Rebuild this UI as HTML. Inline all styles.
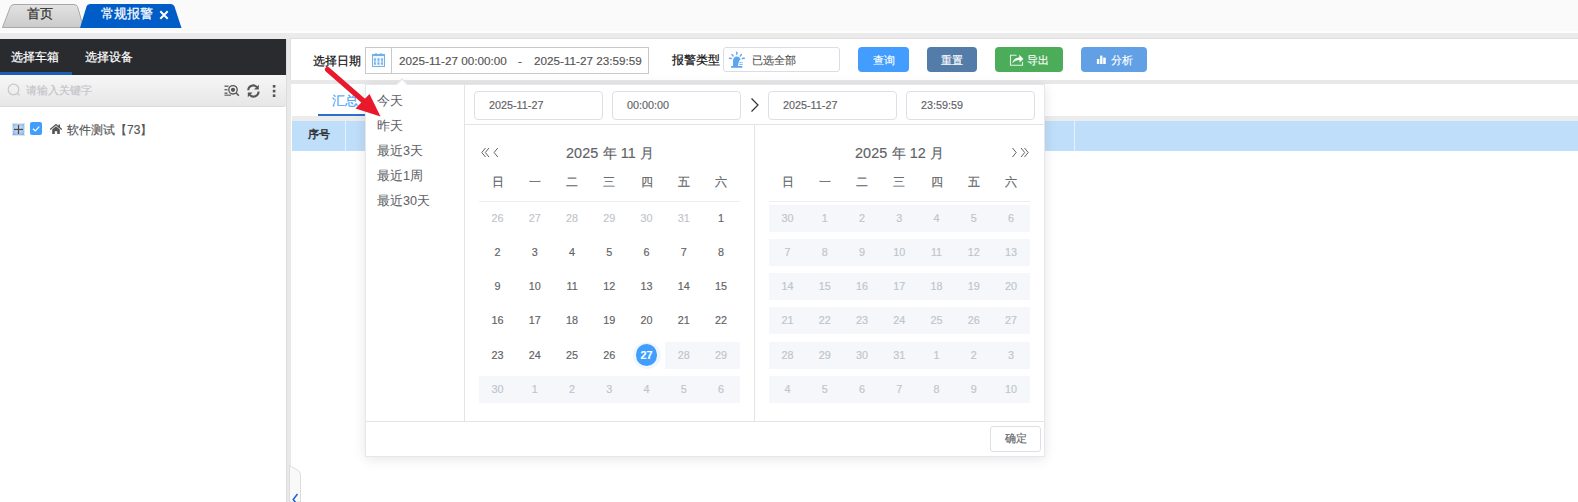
<!DOCTYPE html><html><head><meta charset="utf-8"><style>
*{margin:0;padding:0;box-sizing:border-box}
html,body{width:1578px;height:502px;overflow:hidden;background:#fafafa;font-family:"Liberation Sans",sans-serif;}
.ab{position:absolute}
.t{position:absolute;white-space:nowrap;line-height:1;-webkit-text-stroke:0.15px}
.b{-webkit-text-stroke:0.22px}
</style></head><body>
<svg class="ab" style="left:0;top:0" width="200" height="32">
<defs><linearGradient id="gt" x1="0" y1="0" x2="0" y2="1"><stop offset="0" stop-color="#e2e2e2"/><stop offset="1" stop-color="#cbcbcb"/></linearGradient></defs>
<path d="M2.5 27.5 L10.5 6.5 Q11.5 4.5 14 4.5 L74 4.5 Q76.5 4.5 77.5 6.5 L83.5 27.5 Z" fill="url(#gt)" stroke="#a9a9a9" stroke-width="1"/>
<path d="M80 28 L86.5 6.5 Q87.3 4 90 4 L171 4 Q173.5 4 174.5 6.5 L181.5 28 Z" fill="#005cc7"/>
</svg>
<div class="t b" style="left:27px;top:7px;font-size:13px;color:#333">首页</div>
<div class="t b" style="left:101px;top:7px;font-size:13px;color:#fff">常规报警</div>
<svg class="ab" style="left:158px;top:9px" width="12" height="12"><path d="M2.3 2.3 L9.7 9.7 M9.7 2.3 L2.3 9.7" stroke="#fff" stroke-width="2"/></svg>
<div class="ab" style="left:0;top:31px;width:1578px;height:2px;background:#fdfdfd"></div>
<div class="ab" style="left:0;top:33px;width:1578px;height:6px;background:#ebebeb"></div>
<div class="ab" style="left:0;top:39px;width:286px;height:36px;background:#2a2b2f"></div>
<div class="ab" style="left:0;top:72px;width:72px;height:3px;background:#1c5db5"></div>
<div class="t b" style="left:11px;top:51px;font-size:12px;color:#fff">选择车箱</div>
<div class="t b" style="left:85px;top:51px;font-size:12px;color:#fff">选择设备</div>
<div class="ab" style="left:0;top:75px;width:286px;height:32px;background:linear-gradient(#f6f6f6,#e7e7e7);border-bottom:1px solid #d6dce4;border-radius:0 0 4px 0;box-shadow:1px 0 0 #e0e3e8"></div>
<svg class="ab" style="left:6px;top:82px" width="16" height="16"><circle cx="7.5" cy="7.5" r="5.3" fill="none" stroke="#c8c8c8" stroke-width="1.2"/><line x1="11.3" y1="11.3" x2="13.5" y2="13.5" stroke="#c8c8c8" stroke-width="1.3"/></svg>
<div class="t" style="left:26px;top:85px;font-size:11px;color:#c3c3c8">请输入关键字</div>
<svg class="ab" style="left:223px;top:84px" width="18" height="14">
<rect x="1.5" y="1.5" width="4" height="1.4" fill="#666"/><rect x="1.5" y="5" width="3" height="1.4" fill="#666"/><rect x="1.5" y="8.5" width="3" height="1.4" fill="#666"/><rect x="1.5" y="10.5" width="6.5" height="1.4" fill="#777"/>
<circle cx="10" cy="5.8" r="4.2" fill="none" stroke="#555" stroke-width="1.3"/><circle cx="10" cy="5.8" r="2.1" fill="#555"/>
<line x1="13" y1="8.8" x2="15.8" y2="11.8" stroke="#555" stroke-width="1.5"/></svg>
<svg class="ab" style="left:246px;top:84px" width="15" height="14">
<path d="M2.2 6.2 A5 5 0 0 1 11 3.2" fill="none" stroke="#555" stroke-width="2"/><path d="M12.8 0.8 L12.8 5.6 L8 5.6 Z" fill="#555"/>
<path d="M12.6 7.6 A5 5 0 0 1 3.8 10.8" fill="none" stroke="#555" stroke-width="2"/><path d="M1.8 13.2 L1.8 8.4 L6.6 8.4 Z" fill="#555"/></svg>
<svg class="ab" style="left:271px;top:84px" width="6" height="14"><rect x="1.8" y="1" width="2.6" height="2.6" fill="#555"/><rect x="1.8" y="5.8" width="2.6" height="2.6" fill="#555"/><rect x="1.8" y="10.4" width="2.6" height="2.6" fill="#555"/></svg>
<div class="ab" style="left:0;top:107px;width:286px;height:395px;background:#fff"></div>
<div class="ab" style="left:12px;top:123px;width:13px;height:13px;background:radial-gradient(circle at 50% 45%,#e4eefa 0%,#a9cdf3 55%,#6ea8ea 100%);border:1px solid #dfe3e8"></div>
<svg class="ab" style="left:12px;top:123px" width="13" height="13"><rect x="2" y="5.8" width="9" height="1.3" fill="#4a4a4a"/><rect x="5.85" y="2" width="1.3" height="9" fill="#4a4a4a"/></svg>
<div class="ab" style="left:30px;top:122px;width:12px;height:13px;background:#409eff;border-radius:2px"></div>
<svg class="ab" style="left:30px;top:122px" width="12" height="13"><path d="M3 6.8 L5.3 9 L9.3 4.6" fill="none" stroke="#fff" stroke-width="1.2"/></svg>
<svg class="ab" style="left:49px;top:123px" width="14" height="12"><path d="M1.2 6.6 L7 1.6 L12.8 6.6" fill="none" stroke="#555" stroke-width="1.3"/><path d="M3.2 6.4 L7 3.2 L10.8 6.4 L10.8 11 L8.2 11 L8.2 8.3 L5.8 8.3 L5.8 11 L3.2 11 Z" fill="#555"/><rect x="9.4" y="1.6" width="1.6" height="3" fill="#555"/></svg>
<div class="t" style="left:67px;top:124px;font-size:12px;color:#555">软件测试【73】</div>
<div class="ab" style="left:286px;top:39px;width:5px;height:463px;background:#e9e9e9;border-left:1px solid #dcdcdc"></div>
<div class="ab" style="left:290px;top:38px;width:1288px;height:42px;background:#fff;border-top:1px solid #dedede;border-left:1px solid #dedede"></div>
<div class="ab" style="left:291px;top:80px;width:1287px;height:4px;background:#e8e8e8"></div>
<div class="ab" style="left:291px;top:84px;width:1287px;height:418px;background:#fff"></div>
<div class="t b" style="left:313px;top:55px;font-size:12px;color:#111">选择日期</div>
<div class="ab" style="left:365px;top:47px;width:284px;height:27px;border:1px solid #c9c9c9;background:#fff"></div>
<div class="ab" style="left:391px;top:47px;width:1px;height:27px;background:#c9c9c9"></div>
<svg class="ab" style="left:371px;top:52px" width="15" height="15">
<rect x="1.5" y="2.5" width="12" height="12" fill="#eef5fd" stroke="#74b0ea" stroke-width="1"/>
<rect x="1" y="2" width="13" height="2" fill="#74b0ea"/>
<circle cx="5" cy="2.6" r="1.4" fill="#74b0ea"/><circle cx="10" cy="2.6" r="1.4" fill="#74b0ea"/>
<g fill="#9cc8f2"><rect x="3" y="6" width="1.8" height="7"/><rect x="6.6" y="6" width="1.8" height="7"/><rect x="10.2" y="6" width="1.8" height="7"/></g>
<g fill="#74b0ea"><rect x="3" y="7" width="1.8" height="1.2"/><rect x="6.6" y="7" width="1.8" height="1.2"/><rect x="10.2" y="7" width="1.8" height="1.2"/><rect x="3" y="11" width="1.8" height="1.2"/><rect x="6.6" y="11" width="1.8" height="1.2"/><rect x="10.2" y="11" width="1.8" height="1.2"/></g>
</svg>
<div class="t" style="left:399px;top:55px;font-size:11.7px;color:#555">2025-11-27 00:00:00</div>
<div class="t" style="left:518px;top:55px;font-size:11.7px;color:#555">-</div>
<div class="t" style="left:534px;top:55px;font-size:11.7px;color:#555">2025-11-27 23:59:59</div>
<div class="t b" style="left:672px;top:54px;font-size:12px;color:#111">报警类型</div>
<div class="ab" style="left:723px;top:47px;width:117px;height:25px;border:1px solid #d9dde6;border-radius:3px;background:#fff"></div>
<svg class="ab" style="left:728px;top:51px" width="18" height="18">
<g stroke="#5ea5f0" stroke-width="1.4" stroke-linecap="round"><line x1="8.8" y1="1.3" x2="8.8" y2="3.3"/><line x1="4" y1="3.6" x2="5.1" y2="5"/><line x1="13.4" y1="3.6" x2="12.3" y2="5"/><line x1="1.5" y1="7.3" x2="3.3" y2="7.5"/><line x1="14.3" y1="7.5" x2="16.3" y2="7.3"/></g>
<path d="M5 15 L5 10.2 Q5 5.5 9 5.5 Q11.6 5.5 12.6 8.6 L11.4 9.6 Q10.4 11.5 10 15 Z" fill="#5ea5f0"/>
<rect x="3" y="15" width="11.5" height="1.8" rx="0.5" fill="#5ea5f0"/>
<g fill="#7db6f2"><rect x="11.2" y="11.2" width="3.6" height="0.9"/><rect x="11.2" y="13.1" width="3.6" height="0.9"/></g></svg>
<div class="t" style="left:752px;top:55px;font-size:11px;color:#555">已选全部</div>
<div class="ab" style="left:858px;top:47px;width:51px;height:25px;background:#429dff;border-radius:4px"></div>
<div class="t" style="left:873px;top:55px;font-size:11px;color:#fff">查询</div>
<div class="ab" style="left:927px;top:47px;width:50px;height:25px;background:#537ca8;border-radius:4px"></div>
<div class="t" style="left:941px;top:55px;font-size:11px;color:#fff">重置</div>
<div class="ab" style="left:995px;top:47px;width:68px;height:25px;background:#4bad5a;border-radius:4px"></div>
<div class="t" style="left:1027px;top:55px;font-size:11px;color:#fff">导出</div>
<svg class="ab" style="left:1009px;top:53px" width="16" height="15"><path d="M7.5 2.3 L1.5 2.3 L1.5 12.3 L13.5 12.3 L13.5 8.8" fill="none" stroke="#fff" stroke-opacity="0.85" stroke-width="1.1"/><path d="M3.3 10.2 Q4.8 4.8 10.3 4.4 L10.3 1.8 L14.4 5.9 L10.5 9.4 L10.5 7 Q6.5 6.9 3.3 10.2 Z" fill="#fff"/></svg>
<div class="ab" style="left:1081px;top:47px;width:66px;height:25px;background:#62a0e5;border-radius:4px"></div>
<div class="t" style="left:1111px;top:55px;font-size:11px;color:#fff">分析</div>
<svg class="ab" style="left:1096px;top:55px" width="11" height="10"><rect x="0.9" y="4" width="2.4" height="5" fill="#fff"/><rect x="4.1" y="0.6" width="2.4" height="8.4" fill="#fff"/><rect x="7.2" y="2.7" width="2.6" height="6.3" fill="#fff"/></svg>
<div class="t" style="left:332px;top:94px;font-size:13px;color:#409eff">汇总</div>
<div class="ab" style="left:318px;top:114px;width:60px;height:2px;background:#2a70d0"></div>
<div class="ab" style="left:292px;top:116px;width:1286px;height:5px;background:#ececec"></div>
<div class="ab" style="left:292px;top:121px;width:1286px;height:30px;background:#bfdef9"></div>
<div class="ab" style="left:345px;top:121px;width:1px;height:30px;background:#e6f1fc"></div>
<div class="ab" style="left:1074px;top:121px;width:1px;height:30px;background:#e6f1fc"></div>
<div class="t" style="left:308px;top:129px;font-size:11.4px;color:#333;-webkit-text-stroke:0.5px #333">序号</div>
<div class="ab" style="left:365px;top:84px;width:680px;height:373px;background:#fff;border:1px solid #e4e7ed;box-shadow:0 2px 12px rgba(0,0,0,.1)"></div>
<div class="ab" style="left:396px;top:78px;width:0;height:0;border:6px solid transparent;border-top:0;border-bottom:6px solid #e4e7ed"></div>
<div class="ab" style="left:397px;top:79.5px;width:0;height:0;border:5px solid transparent;border-top:0;border-bottom:5px solid #fff"></div>
<div class="ab" style="left:464px;top:85px;width:1px;height:336px;background:#e4e4e4"></div>
<div class="t" style="left:377px;top:95px;font-size:12.6px;color:#606266;-webkit-text-stroke:0.05px">今天</div>
<div class="t" style="left:377px;top:120px;font-size:12.6px;color:#606266;-webkit-text-stroke:0.05px">昨天</div>
<div class="t" style="left:377px;top:145px;font-size:12.6px;color:#606266;-webkit-text-stroke:0.05px">最近3天</div>
<div class="t" style="left:377px;top:170px;font-size:12.6px;color:#606266;-webkit-text-stroke:0.05px">最近1周</div>
<div class="t" style="left:377px;top:195px;font-size:12.6px;color:#606266;-webkit-text-stroke:0.05px">最近30天</div>
<div class="ab" style="left:474px;top:91px;width:129px;height:29px;border:1px solid #dcdfe6;border-radius:4px"></div>
<div class="t" style="left:489px;top:100px;font-size:10.8px;color:#606266">2025-11-27</div>
<div class="ab" style="left:612px;top:91px;width:129px;height:29px;border:1px solid #dcdfe6;border-radius:4px"></div>
<div class="t" style="left:627px;top:100px;font-size:10.8px;color:#606266">00:00:00</div>
<div class="ab" style="left:768px;top:91px;width:129px;height:29px;border:1px solid #dcdfe6;border-radius:4px"></div>
<div class="t" style="left:783px;top:100px;font-size:10.8px;color:#606266">2025-11-27</div>
<div class="ab" style="left:906px;top:91px;width:129px;height:29px;border:1px solid #dcdfe6;border-radius:4px"></div>
<div class="t" style="left:921px;top:100px;font-size:10.8px;color:#606266">23:59:59</div>
<svg class="ab" style="left:749px;top:97px" width="12" height="16"><path d="M2.5 1.5 L9 8 L2.5 14.5" fill="none" stroke="#303133" stroke-width="1.2"/></svg>
<div class="ab" style="left:465px;top:124px;width:579px;height:1px;background:#e4e4e4"></div>
<div class="ab" style="left:754px;top:125px;width:1px;height:296px;background:#e4e4e4"></div>
<div class="ab" style="left:366px;top:421px;width:678px;height:1px;background:#e4e4e4"></div>
<div class="ab" style="left:990px;top:426px;width:51px;height:26px;border:1px solid #dcdfe6;border-radius:3px;background:#fff"></div>
<div class="t" style="left:1005px;top:433px;font-size:10.8px;color:#606266">确定</div>
<div class="t" style="left:566px;top:146px;font-size:14.4px;letter-spacing:0.1px;color:#606266">2025 年 11 月</div>
<svg class="ab" style="left:480px;top:147px" width="20" height="11"><g fill="none" stroke="#606266" stroke-width="1"><path d="M5.5 1 L1.8 5.5 L5.5 10"/><path d="M9 1 L5.3 5.5 L9 10"/><path d="M17.8 1 L14.1 5.5 L17.8 10"/></g></svg>
<div class="t" style="left:491.6px;top:176px;font-size:12px;color:#606266;width:12px;text-align:center">日</div>
<div class="t" style="left:528.8px;top:176px;font-size:12px;color:#606266;width:12px;text-align:center">一</div>
<div class="t" style="left:566.1px;top:176px;font-size:12px;color:#606266;width:12px;text-align:center">二</div>
<div class="t" style="left:603.3px;top:176px;font-size:12px;color:#606266;width:12px;text-align:center">三</div>
<div class="t" style="left:640.5px;top:176px;font-size:12px;color:#606266;width:12px;text-align:center">四</div>
<div class="t" style="left:677.8px;top:176px;font-size:12px;color:#606266;width:12px;text-align:center">五</div>
<div class="t" style="left:715.0px;top:176px;font-size:12px;color:#606266;width:12px;text-align:center">六</div>
<div class="ab" style="left:479px;top:201px;width:260.6px;height:1px;background:#ebeef5"></div>
<div class="t" style="left:482.61px;top:212.50px;width:30px;text-align:center;font-size:10.8px;color:#c0c4cc;font-weight:normal">26</div>
<div class="t" style="left:519.84px;top:212.50px;width:30px;text-align:center;font-size:10.8px;color:#c0c4cc;font-weight:normal">27</div>
<div class="t" style="left:557.07px;top:212.50px;width:30px;text-align:center;font-size:10.8px;color:#c0c4cc;font-weight:normal">28</div>
<div class="t" style="left:594.30px;top:212.50px;width:30px;text-align:center;font-size:10.8px;color:#c0c4cc;font-weight:normal">29</div>
<div class="t" style="left:631.53px;top:212.50px;width:30px;text-align:center;font-size:10.8px;color:#c0c4cc;font-weight:normal">30</div>
<div class="t" style="left:668.76px;top:212.50px;width:30px;text-align:center;font-size:10.8px;color:#c0c4cc;font-weight:normal">31</div>
<div class="t" style="left:705.99px;top:212.50px;width:30px;text-align:center;font-size:10.8px;color:#606266;font-weight:normal">1</div>
<div class="t" style="left:482.61px;top:246.75px;width:30px;text-align:center;font-size:10.8px;color:#606266;font-weight:normal">2</div>
<div class="t" style="left:519.84px;top:246.75px;width:30px;text-align:center;font-size:10.8px;color:#606266;font-weight:normal">3</div>
<div class="t" style="left:557.07px;top:246.75px;width:30px;text-align:center;font-size:10.8px;color:#606266;font-weight:normal">4</div>
<div class="t" style="left:594.30px;top:246.75px;width:30px;text-align:center;font-size:10.8px;color:#606266;font-weight:normal">5</div>
<div class="t" style="left:631.53px;top:246.75px;width:30px;text-align:center;font-size:10.8px;color:#606266;font-weight:normal">6</div>
<div class="t" style="left:668.76px;top:246.75px;width:30px;text-align:center;font-size:10.8px;color:#606266;font-weight:normal">7</div>
<div class="t" style="left:705.99px;top:246.75px;width:30px;text-align:center;font-size:10.8px;color:#606266;font-weight:normal">8</div>
<div class="t" style="left:482.61px;top:281.00px;width:30px;text-align:center;font-size:10.8px;color:#606266;font-weight:normal">9</div>
<div class="t" style="left:519.84px;top:281.00px;width:30px;text-align:center;font-size:10.8px;color:#606266;font-weight:normal">10</div>
<div class="t" style="left:557.07px;top:281.00px;width:30px;text-align:center;font-size:10.8px;color:#606266;font-weight:normal">11</div>
<div class="t" style="left:594.30px;top:281.00px;width:30px;text-align:center;font-size:10.8px;color:#606266;font-weight:normal">12</div>
<div class="t" style="left:631.53px;top:281.00px;width:30px;text-align:center;font-size:10.8px;color:#606266;font-weight:normal">13</div>
<div class="t" style="left:668.76px;top:281.00px;width:30px;text-align:center;font-size:10.8px;color:#606266;font-weight:normal">14</div>
<div class="t" style="left:705.99px;top:281.00px;width:30px;text-align:center;font-size:10.8px;color:#606266;font-weight:normal">15</div>
<div class="t" style="left:482.61px;top:315.25px;width:30px;text-align:center;font-size:10.8px;color:#606266;font-weight:normal">16</div>
<div class="t" style="left:519.84px;top:315.25px;width:30px;text-align:center;font-size:10.8px;color:#606266;font-weight:normal">17</div>
<div class="t" style="left:557.07px;top:315.25px;width:30px;text-align:center;font-size:10.8px;color:#606266;font-weight:normal">18</div>
<div class="t" style="left:594.30px;top:315.25px;width:30px;text-align:center;font-size:10.8px;color:#606266;font-weight:normal">19</div>
<div class="t" style="left:631.53px;top:315.25px;width:30px;text-align:center;font-size:10.8px;color:#606266;font-weight:normal">20</div>
<div class="t" style="left:668.76px;top:315.25px;width:30px;text-align:center;font-size:10.8px;color:#606266;font-weight:normal">21</div>
<div class="t" style="left:705.99px;top:315.25px;width:30px;text-align:center;font-size:10.8px;color:#606266;font-weight:normal">22</div>
<div class="ab" style="left:665.14px;top:341.50px;width:37.63px;height:27px;background:#f5f7fa"></div>
<div class="ab" style="left:702.37px;top:341.50px;width:37.63px;height:27px;background:#f5f7fa"></div>
<div class="t" style="left:482.61px;top:349.50px;width:30px;text-align:center;font-size:10.8px;color:#606266;font-weight:normal">23</div>
<div class="t" style="left:519.84px;top:349.50px;width:30px;text-align:center;font-size:10.8px;color:#606266;font-weight:normal">24</div>
<div class="t" style="left:557.07px;top:349.50px;width:30px;text-align:center;font-size:10.8px;color:#606266;font-weight:normal">25</div>
<div class="t" style="left:594.30px;top:349.50px;width:30px;text-align:center;font-size:10.8px;color:#606266;font-weight:normal">26</div>
<div class="ab" style="left:632.53px;top:341.50px;width:28px;height:27px;border-radius:50%;background:#f2f6fc"></div>
<div class="ab" style="left:635.73px;top:344.20px;width:21.6px;height:21.6px;border-radius:50%;background:#409eff"></div>
<div class="t" style="left:631.53px;top:349.50px;width:30px;text-align:center;font-size:10.8px;color:#fff;font-weight:bold">27</div>
<div class="t" style="left:668.76px;top:349.50px;width:30px;text-align:center;font-size:10.8px;color:#c0c4cc;font-weight:normal">28</div>
<div class="t" style="left:705.99px;top:349.50px;width:30px;text-align:center;font-size:10.8px;color:#c0c4cc;font-weight:normal">29</div>
<div class="ab" style="left:479.00px;top:375.75px;width:37.63px;height:27px;background:#f5f7fa"></div>
<div class="ab" style="left:516.23px;top:375.75px;width:37.63px;height:27px;background:#f5f7fa"></div>
<div class="ab" style="left:553.46px;top:375.75px;width:37.63px;height:27px;background:#f5f7fa"></div>
<div class="ab" style="left:590.69px;top:375.75px;width:37.63px;height:27px;background:#f5f7fa"></div>
<div class="ab" style="left:627.91px;top:375.75px;width:37.63px;height:27px;background:#f5f7fa"></div>
<div class="ab" style="left:665.14px;top:375.75px;width:37.63px;height:27px;background:#f5f7fa"></div>
<div class="ab" style="left:702.37px;top:375.75px;width:37.63px;height:27px;background:#f5f7fa"></div>
<div class="t" style="left:482.61px;top:383.75px;width:30px;text-align:center;font-size:10.8px;color:#c0c4cc;font-weight:normal">30</div>
<div class="t" style="left:519.84px;top:383.75px;width:30px;text-align:center;font-size:10.8px;color:#c0c4cc;font-weight:normal">1</div>
<div class="t" style="left:557.07px;top:383.75px;width:30px;text-align:center;font-size:10.8px;color:#c0c4cc;font-weight:normal">2</div>
<div class="t" style="left:594.30px;top:383.75px;width:30px;text-align:center;font-size:10.8px;color:#c0c4cc;font-weight:normal">3</div>
<div class="t" style="left:631.53px;top:383.75px;width:30px;text-align:center;font-size:10.8px;color:#c0c4cc;font-weight:normal">4</div>
<div class="t" style="left:668.76px;top:383.75px;width:30px;text-align:center;font-size:10.8px;color:#c0c4cc;font-weight:normal">5</div>
<div class="t" style="left:705.99px;top:383.75px;width:30px;text-align:center;font-size:10.8px;color:#c0c4cc;font-weight:normal">6</div>
<div class="t" style="left:855px;top:146px;font-size:14.4px;letter-spacing:0.1px;color:#606266">2025 年 12 月</div>
<svg class="ab" style="left:1010px;top:147px" width="20" height="11"><g fill="none" stroke="#606266" stroke-width="1"><path d="M2.5 1 L6.2 5.5 L2.5 10"/><path d="M11 1 L14.7 5.5 L11 10"/><path d="M14.5 1 L18.2 5.5 L14.5 10"/></g></svg>
<div class="t" style="left:781.6px;top:176px;font-size:12px;color:#606266;width:12px;text-align:center">日</div>
<div class="t" style="left:818.8px;top:176px;font-size:12px;color:#606266;width:12px;text-align:center">一</div>
<div class="t" style="left:856.1px;top:176px;font-size:12px;color:#606266;width:12px;text-align:center">二</div>
<div class="t" style="left:893.3px;top:176px;font-size:12px;color:#606266;width:12px;text-align:center">三</div>
<div class="t" style="left:930.5px;top:176px;font-size:12px;color:#606266;width:12px;text-align:center">四</div>
<div class="t" style="left:967.8px;top:176px;font-size:12px;color:#606266;width:12px;text-align:center">五</div>
<div class="t" style="left:1005.0px;top:176px;font-size:12px;color:#606266;width:12px;text-align:center">六</div>
<div class="ab" style="left:769px;top:201px;width:260.6px;height:1px;background:#ebeef5"></div>
<div class="ab" style="left:769.00px;top:204.50px;width:37.63px;height:27px;background:#f5f7fa"></div>
<div class="ab" style="left:806.23px;top:204.50px;width:37.63px;height:27px;background:#f5f7fa"></div>
<div class="ab" style="left:843.46px;top:204.50px;width:37.63px;height:27px;background:#f5f7fa"></div>
<div class="ab" style="left:880.69px;top:204.50px;width:37.63px;height:27px;background:#f5f7fa"></div>
<div class="ab" style="left:917.91px;top:204.50px;width:37.63px;height:27px;background:#f5f7fa"></div>
<div class="ab" style="left:955.14px;top:204.50px;width:37.63px;height:27px;background:#f5f7fa"></div>
<div class="ab" style="left:992.37px;top:204.50px;width:37.63px;height:27px;background:#f5f7fa"></div>
<div class="t" style="left:772.61px;top:212.50px;width:30px;text-align:center;font-size:10.8px;color:#c0c4cc;font-weight:normal">30</div>
<div class="t" style="left:809.84px;top:212.50px;width:30px;text-align:center;font-size:10.8px;color:#c0c4cc;font-weight:normal">1</div>
<div class="t" style="left:847.07px;top:212.50px;width:30px;text-align:center;font-size:10.8px;color:#c0c4cc;font-weight:normal">2</div>
<div class="t" style="left:884.30px;top:212.50px;width:30px;text-align:center;font-size:10.8px;color:#c0c4cc;font-weight:normal">3</div>
<div class="t" style="left:921.53px;top:212.50px;width:30px;text-align:center;font-size:10.8px;color:#c0c4cc;font-weight:normal">4</div>
<div class="t" style="left:958.76px;top:212.50px;width:30px;text-align:center;font-size:10.8px;color:#c0c4cc;font-weight:normal">5</div>
<div class="t" style="left:995.99px;top:212.50px;width:30px;text-align:center;font-size:10.8px;color:#c0c4cc;font-weight:normal">6</div>
<div class="ab" style="left:769.00px;top:238.75px;width:37.63px;height:27px;background:#f5f7fa"></div>
<div class="ab" style="left:806.23px;top:238.75px;width:37.63px;height:27px;background:#f5f7fa"></div>
<div class="ab" style="left:843.46px;top:238.75px;width:37.63px;height:27px;background:#f5f7fa"></div>
<div class="ab" style="left:880.69px;top:238.75px;width:37.63px;height:27px;background:#f5f7fa"></div>
<div class="ab" style="left:917.91px;top:238.75px;width:37.63px;height:27px;background:#f5f7fa"></div>
<div class="ab" style="left:955.14px;top:238.75px;width:37.63px;height:27px;background:#f5f7fa"></div>
<div class="ab" style="left:992.37px;top:238.75px;width:37.63px;height:27px;background:#f5f7fa"></div>
<div class="t" style="left:772.61px;top:246.75px;width:30px;text-align:center;font-size:10.8px;color:#c0c4cc;font-weight:normal">7</div>
<div class="t" style="left:809.84px;top:246.75px;width:30px;text-align:center;font-size:10.8px;color:#c0c4cc;font-weight:normal">8</div>
<div class="t" style="left:847.07px;top:246.75px;width:30px;text-align:center;font-size:10.8px;color:#c0c4cc;font-weight:normal">9</div>
<div class="t" style="left:884.30px;top:246.75px;width:30px;text-align:center;font-size:10.8px;color:#c0c4cc;font-weight:normal">10</div>
<div class="t" style="left:921.53px;top:246.75px;width:30px;text-align:center;font-size:10.8px;color:#c0c4cc;font-weight:normal">11</div>
<div class="t" style="left:958.76px;top:246.75px;width:30px;text-align:center;font-size:10.8px;color:#c0c4cc;font-weight:normal">12</div>
<div class="t" style="left:995.99px;top:246.75px;width:30px;text-align:center;font-size:10.8px;color:#c0c4cc;font-weight:normal">13</div>
<div class="ab" style="left:769.00px;top:273.00px;width:37.63px;height:27px;background:#f5f7fa"></div>
<div class="ab" style="left:806.23px;top:273.00px;width:37.63px;height:27px;background:#f5f7fa"></div>
<div class="ab" style="left:843.46px;top:273.00px;width:37.63px;height:27px;background:#f5f7fa"></div>
<div class="ab" style="left:880.69px;top:273.00px;width:37.63px;height:27px;background:#f5f7fa"></div>
<div class="ab" style="left:917.91px;top:273.00px;width:37.63px;height:27px;background:#f5f7fa"></div>
<div class="ab" style="left:955.14px;top:273.00px;width:37.63px;height:27px;background:#f5f7fa"></div>
<div class="ab" style="left:992.37px;top:273.00px;width:37.63px;height:27px;background:#f5f7fa"></div>
<div class="t" style="left:772.61px;top:281.00px;width:30px;text-align:center;font-size:10.8px;color:#c0c4cc;font-weight:normal">14</div>
<div class="t" style="left:809.84px;top:281.00px;width:30px;text-align:center;font-size:10.8px;color:#c0c4cc;font-weight:normal">15</div>
<div class="t" style="left:847.07px;top:281.00px;width:30px;text-align:center;font-size:10.8px;color:#c0c4cc;font-weight:normal">16</div>
<div class="t" style="left:884.30px;top:281.00px;width:30px;text-align:center;font-size:10.8px;color:#c0c4cc;font-weight:normal">17</div>
<div class="t" style="left:921.53px;top:281.00px;width:30px;text-align:center;font-size:10.8px;color:#c0c4cc;font-weight:normal">18</div>
<div class="t" style="left:958.76px;top:281.00px;width:30px;text-align:center;font-size:10.8px;color:#c0c4cc;font-weight:normal">19</div>
<div class="t" style="left:995.99px;top:281.00px;width:30px;text-align:center;font-size:10.8px;color:#c0c4cc;font-weight:normal">20</div>
<div class="ab" style="left:769.00px;top:307.25px;width:37.63px;height:27px;background:#f5f7fa"></div>
<div class="ab" style="left:806.23px;top:307.25px;width:37.63px;height:27px;background:#f5f7fa"></div>
<div class="ab" style="left:843.46px;top:307.25px;width:37.63px;height:27px;background:#f5f7fa"></div>
<div class="ab" style="left:880.69px;top:307.25px;width:37.63px;height:27px;background:#f5f7fa"></div>
<div class="ab" style="left:917.91px;top:307.25px;width:37.63px;height:27px;background:#f5f7fa"></div>
<div class="ab" style="left:955.14px;top:307.25px;width:37.63px;height:27px;background:#f5f7fa"></div>
<div class="ab" style="left:992.37px;top:307.25px;width:37.63px;height:27px;background:#f5f7fa"></div>
<div class="t" style="left:772.61px;top:315.25px;width:30px;text-align:center;font-size:10.8px;color:#c0c4cc;font-weight:normal">21</div>
<div class="t" style="left:809.84px;top:315.25px;width:30px;text-align:center;font-size:10.8px;color:#c0c4cc;font-weight:normal">22</div>
<div class="t" style="left:847.07px;top:315.25px;width:30px;text-align:center;font-size:10.8px;color:#c0c4cc;font-weight:normal">23</div>
<div class="t" style="left:884.30px;top:315.25px;width:30px;text-align:center;font-size:10.8px;color:#c0c4cc;font-weight:normal">24</div>
<div class="t" style="left:921.53px;top:315.25px;width:30px;text-align:center;font-size:10.8px;color:#c0c4cc;font-weight:normal">25</div>
<div class="t" style="left:958.76px;top:315.25px;width:30px;text-align:center;font-size:10.8px;color:#c0c4cc;font-weight:normal">26</div>
<div class="t" style="left:995.99px;top:315.25px;width:30px;text-align:center;font-size:10.8px;color:#c0c4cc;font-weight:normal">27</div>
<div class="ab" style="left:769.00px;top:341.50px;width:37.63px;height:27px;background:#f5f7fa"></div>
<div class="ab" style="left:806.23px;top:341.50px;width:37.63px;height:27px;background:#f5f7fa"></div>
<div class="ab" style="left:843.46px;top:341.50px;width:37.63px;height:27px;background:#f5f7fa"></div>
<div class="ab" style="left:880.69px;top:341.50px;width:37.63px;height:27px;background:#f5f7fa"></div>
<div class="ab" style="left:917.91px;top:341.50px;width:37.63px;height:27px;background:#f5f7fa"></div>
<div class="ab" style="left:955.14px;top:341.50px;width:37.63px;height:27px;background:#f5f7fa"></div>
<div class="ab" style="left:992.37px;top:341.50px;width:37.63px;height:27px;background:#f5f7fa"></div>
<div class="t" style="left:772.61px;top:349.50px;width:30px;text-align:center;font-size:10.8px;color:#c0c4cc;font-weight:normal">28</div>
<div class="t" style="left:809.84px;top:349.50px;width:30px;text-align:center;font-size:10.8px;color:#c0c4cc;font-weight:normal">29</div>
<div class="t" style="left:847.07px;top:349.50px;width:30px;text-align:center;font-size:10.8px;color:#c0c4cc;font-weight:normal">30</div>
<div class="t" style="left:884.30px;top:349.50px;width:30px;text-align:center;font-size:10.8px;color:#c0c4cc;font-weight:normal">31</div>
<div class="t" style="left:921.53px;top:349.50px;width:30px;text-align:center;font-size:10.8px;color:#c0c4cc;font-weight:normal">1</div>
<div class="t" style="left:958.76px;top:349.50px;width:30px;text-align:center;font-size:10.8px;color:#c0c4cc;font-weight:normal">2</div>
<div class="t" style="left:995.99px;top:349.50px;width:30px;text-align:center;font-size:10.8px;color:#c0c4cc;font-weight:normal">3</div>
<div class="ab" style="left:769.00px;top:375.75px;width:37.63px;height:27px;background:#f5f7fa"></div>
<div class="ab" style="left:806.23px;top:375.75px;width:37.63px;height:27px;background:#f5f7fa"></div>
<div class="ab" style="left:843.46px;top:375.75px;width:37.63px;height:27px;background:#f5f7fa"></div>
<div class="ab" style="left:880.69px;top:375.75px;width:37.63px;height:27px;background:#f5f7fa"></div>
<div class="ab" style="left:917.91px;top:375.75px;width:37.63px;height:27px;background:#f5f7fa"></div>
<div class="ab" style="left:955.14px;top:375.75px;width:37.63px;height:27px;background:#f5f7fa"></div>
<div class="ab" style="left:992.37px;top:375.75px;width:37.63px;height:27px;background:#f5f7fa"></div>
<div class="t" style="left:772.61px;top:383.75px;width:30px;text-align:center;font-size:10.8px;color:#c0c4cc;font-weight:normal">4</div>
<div class="t" style="left:809.84px;top:383.75px;width:30px;text-align:center;font-size:10.8px;color:#c0c4cc;font-weight:normal">5</div>
<div class="t" style="left:847.07px;top:383.75px;width:30px;text-align:center;font-size:10.8px;color:#c0c4cc;font-weight:normal">6</div>
<div class="t" style="left:884.30px;top:383.75px;width:30px;text-align:center;font-size:10.8px;color:#c0c4cc;font-weight:normal">7</div>
<div class="t" style="left:921.53px;top:383.75px;width:30px;text-align:center;font-size:10.8px;color:#c0c4cc;font-weight:normal">8</div>
<div class="t" style="left:958.76px;top:383.75px;width:30px;text-align:center;font-size:10.8px;color:#c0c4cc;font-weight:normal">9</div>
<div class="t" style="left:995.99px;top:383.75px;width:30px;text-align:center;font-size:10.8px;color:#c0c4cc;font-weight:normal">10</div>
<svg class="ab" style="left:288px;top:464px" width="14" height="38"><path d="M1.5 1.5 L10 6.5 Q12.5 8 12.5 10.5 L12.5 38 L1.5 38 Z" fill="#f9f9f9" stroke="#dcdcdc" stroke-width="1"/><path d="M9.5 30 L5.2 35.5 L9.5 41" fill="none" stroke="#1a62d0" stroke-width="1.5"/></svg>
<svg class="ab" style="left:0;top:0;pointer-events:none" width="400" height="130">
<line x1="327.5" y1="69.5" x2="367" y2="104" stroke="#e8192b" stroke-width="5.2" stroke-linecap="round"/>
<path d="M369.5 94 L380.5 116.5 L355.5 108.5 Z" fill="#e8192b"/></svg>
</body></html>
